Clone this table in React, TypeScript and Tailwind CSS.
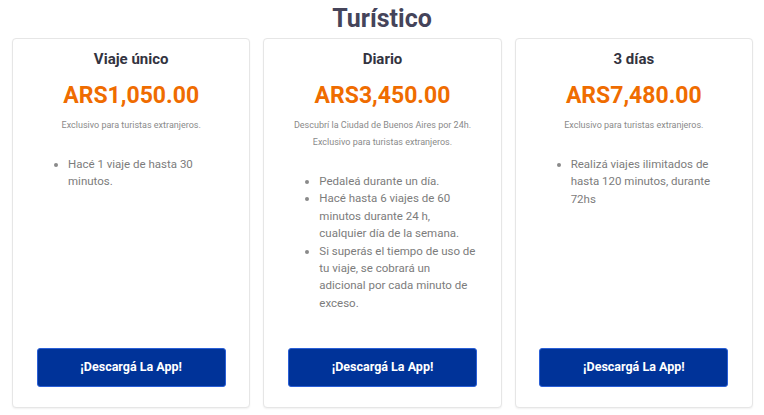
const plans = [
  {
    name: "Viaje único",
    price: "ARS1,050.00",
    notes: ["Exclusivo para turistas extranjeros."],
    items: [["Hacé 1 viaje de hasta 30", "minutos."]],
  },
  {
    name: "Diario",
    price: "ARS3,450.00",
    notes: [
      "Descubrí la Ciudad de Buenos Aires por 24h.",
      "Exclusivo para turistas extranjeros.",
    ],
    items: [
      ["Pedaleá durante un día."],
      ["Hacé hasta 6 viajes de 60", "minutos durante 24 h,", "cualquier día de la semana."],
      [
        "Si superás el tiempo de uso de",
        "tu viaje, se cobrará un",
        "adicional por cada minuto de",
        "exceso.",
      ],
    ],
  },
  {
    name: "3 días",
    price: "ARS7,480.00",
    notes: ["Exclusivo para turistas extranjeros."],
    items: [["Realizá viajes ilimitados de", "hasta 120 minutos, durante", "72hs"]],
  },
];

function PlanCard({ plan }: { plan: (typeof plans)[number] }) {
  return (
    <div className="flex flex-col rounded border border-[#e6e6e6] bg-white shadow-[0_1px_2px_rgba(0,0,0,0.06)] pt-[9px] pb-[20px]">
      <h3 className="text-center text-[15px] leading-[22px] font-bold text-[#333340]">
        {plan.name}
      </h3>
      <div className="mt-[11px] text-center text-[23px] leading-[30px] font-bold text-[#ef6c00]">
        {plan.price}
      </div>
      <div className="mt-[6px]">
        {plan.notes.map((n) => (
          <p key={n} className="text-center text-[9px] leading-[17px] text-[#8a8a8a]">
            {n}
          </p>
        ))}
      </div>
      <ul className="mt-[22px] list-disc pl-[55px] text-[11.5px] leading-[17.4px] text-[#7c7c7c] marker:text-[#8a8a8a]">
        {plan.items.map((lines, i) => (
          <li key={i} className="whitespace-nowrap">
            {lines.map((l, j) => (
              <span key={j}>
                {l}
                {j < lines.length - 1 && <br />}
              </span>
            ))}
          </li>
        ))}
      </ul>
      <button className="mt-auto mx-auto w-[189px] h-[39px] rounded-[3px] border border-[#2a5fd6] bg-[#003399] text-white text-[12.5px] font-bold">
        ¡Descargá La App!
      </button>
    </div>
  );
}

export default function App() {
  return (
    <div
      className="h-[415px] w-full bg-white"
      style={{ fontFamily: 'Roboto, "Open Sans", sans-serif' }}
    >
      <h1 className="h-[38px] pt-[3px] text-center text-[25px] leading-[32px] font-bold text-[#45445a]">
        Turístico
      </h1>
      <div className="grid grid-cols-3 gap-[13px] pl-[12px] pr-[11px] h-[370px]">
        {plans.map((p) => (
          <PlanCard key={p.name} plan={p} />
        ))}
      </div>
    </div>
  );
}
